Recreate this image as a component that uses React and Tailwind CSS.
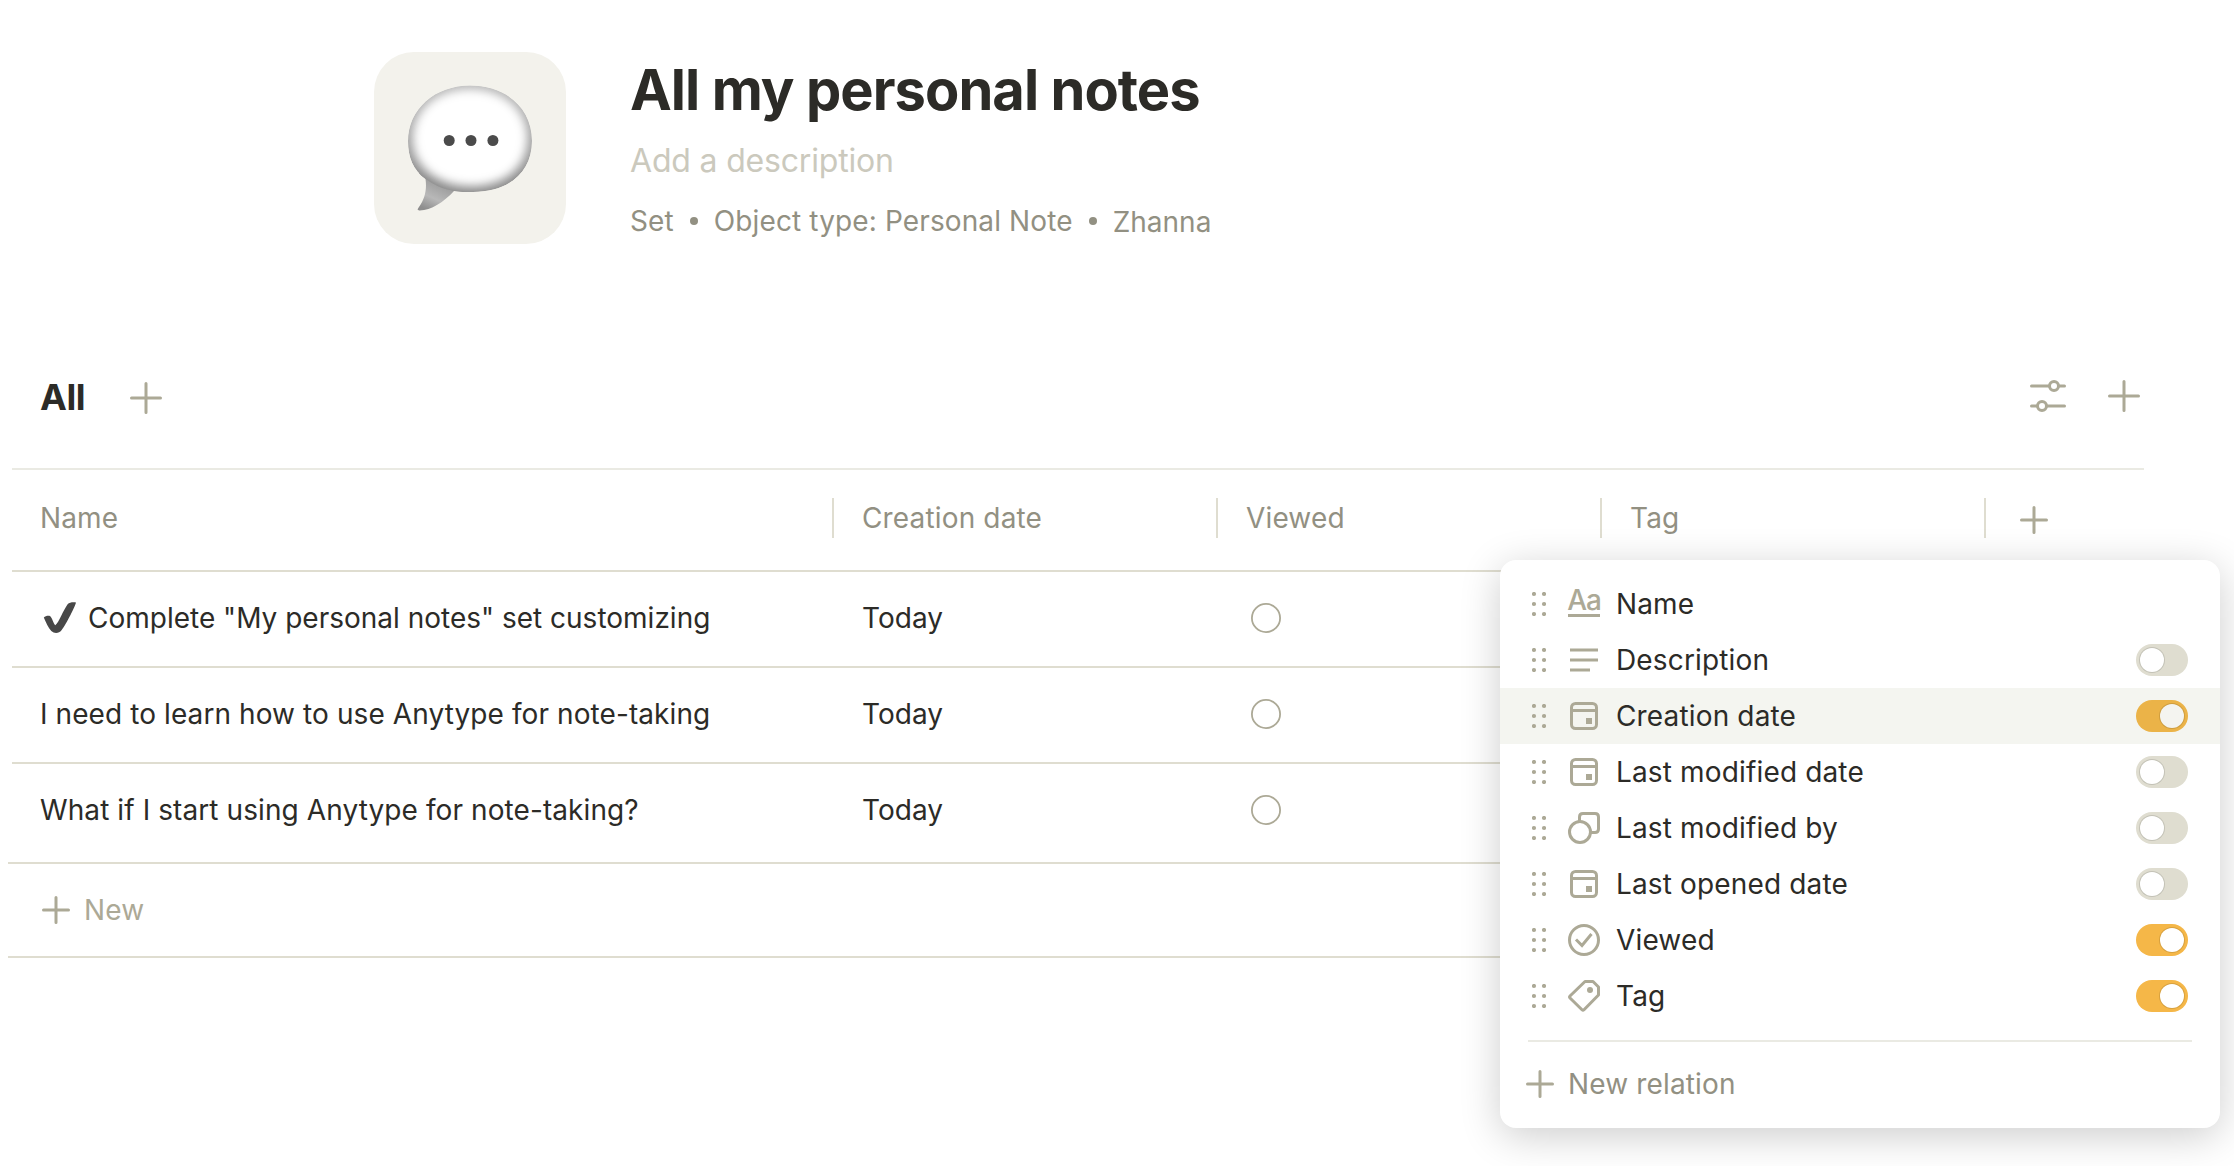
const Plus = ({ size, className = "" }) => (
  <svg width={size} height={size} viewBox={`0 0 ${size} ${size}`} className={`shrink-0 ${className}`} fill="none" stroke="#aca996" strokeWidth="3" strokeLinecap="round">
    <path d={`M${size / 2} 1.5V${size - 1.5}M1.5 ${size / 2}H${size - 1.5}`} />
  </svg>
);

const Bubble = () => (
  <svg width="130" height="130" viewBox="0 0 130 130">
    <defs>
      <linearGradient id="edge" x1="0" y1="0" x2="0" y2="1">
        <stop offset="0" stopColor="#b4b4b4" />
        <stop offset="0.45" stopColor="#a2a2a2" />
        <stop offset="0.85" stopColor="#868686" />
      </linearGradient>
      <linearGradient id="tail" x1="0.75" y1="0.1" x2="0.2" y2="0.9">
        <stop offset="0" stopColor="#858585" />
        <stop offset="0.7" stopColor="#b8b8b8" />
        <stop offset="1" stopColor="#8e8e8e" />
      </linearGradient>
      <filter id="soft" x="-20%" y="-20%" width="140%" height="140%">
        <feGaussianBlur stdDeviation="6" />
      </filter>
      <clipPath id="shape">
        <path d="M66 2.500C102 2.500 128 25 128 58C128 89 105 109 69 109C63 109 56 109 50 108C40 119 26 128 15 127.500C13 127.300 13.500 126 15 124C21 116 23 106 21.500 96C9 87 4 74 4 58C4 26 31 2.500 66 2.500Z" />
      </clipPath>
      <clipPath id="oval">
        <path d="M66 2.500C102 2.500 128 25 128 58C128 89 105 109 69 109C63 109 56 109 50 108C38 106 29 101 21.500 96C9 87 4 74 4 58C4 26 31 2.500 66 2.500Z" />
      </clipPath>
    </defs>
    <g clipPath="url(#shape)">
      <path d="M10 90H70V130H10Z" fill="url(#tail)" />
      <g clipPath="url(#oval)">
        <rect width="130" height="112" fill="url(#edge)" />
        <path d="M66 7C101 7 123 28 123 57C123 84 102 103 68 103C34 103 9 85 9 57C9 28 31 7 66 7Z" fill="#fff" filter="url(#soft)" />
        <ellipse cx="66" cy="54" rx="50" ry="42" fill="#fff" filter="url(#soft)" />
      </g>
    </g>
    <g fill="#4b4b4b">
      <circle cx="45.200" cy="57.500" r="5.500" />
      <circle cx="67" cy="57.500" r="5.500" />
      <circle cx="88.900" cy="57.500" r="5.500" />
    </g>
  </svg>
);

const Sliders = () => (
  <svg width="36" height="32" viewBox="0 0 36 32" fill="none" stroke="#aca996" strokeWidth="3" strokeLinecap="round">
    <path d="M1.500 6H19M29 6H34.500M1.500 26H7M17 26H34.500" />
    <circle cx="24" cy="6" r="4.500" />
    <circle cx="12" cy="26" r="4.500" />
  </svg>
);

const Handle = () => (
  <svg width="14" height="24" viewBox="0 0 14 24" fill="#aca996">
    {[2, 12, 22].map((y) => (
      <g key={y}>
        <circle cx="2" cy={y} r="2.100" />
        <circle cx="12" cy={y} r="2.100" />
      </g>
    ))}
  </svg>
);

const Icon = ({ kind }) => {
  if (kind === "text")
    return (
      <div className="flex h-8 w-8 flex-col items-center">
        <span className="h-[26px] text-[28px] leading-[24px] font-medium tracking-[-1px] text-[#aca996]">Aa</span>
        <div className="h-[3px] w-8 bg-[#aca996]" />
      </div>
    );
  return (
    <svg width="32" height="32" viewBox="0 0 32 32" fill="none" stroke="#aca996" strokeWidth="3">
      {kind === "lines" && <path d="M2 6H30M2 16H30M2 26H22" />}
      {kind === "date" && (
        <>
          <rect x="3.500" y="3.500" width="25" height="25" rx="4" />
          <path d="M3 10.500H29" />
          <rect x="18" y="18" width="6" height="6" fill="#aca996" stroke="none" />
        </>
      )}
      {kind === "relation" && (
        <>
          <circle cx="12" cy="20" r="10.500" />
          <path d="M11.500 9V5Q11.500 1.500 15 1.500H27Q30.500 1.500 30.500 5V17Q30.500 20.500 27 20.500H23" />
        </>
      )}
      {kind === "check" && (
        <>
          <circle cx="16" cy="16" r="14.500" />
          <path d="M8 15.500L14 21.500L23.500 10" />
        </>
      )}
      {kind === "tag" && (
        <>
          <path d="M17 1.500H25L30.500 7V15L16 29.700Q15 30.600 14 29.700L2 18Q1 17 2 16Z" strokeLinejoin="round" />
          <circle cx="22" cy="10" r="3" fill="#aca996" stroke="none" />
        </>
      )}
    </svg>
  );
};

const Toggle = ({ on, active }) => (
  <div className={`flex h-8 w-[52px] items-center rounded-full px-1 ${on ? (active ? "justify-end bg-[#ebb348]" : "justify-end bg-[#f5b748]") : "bg-[#dfddd0]"}`}>
    <div className={`h-6 w-6 rounded-full shadow-[0_0_0_1px_rgba(0,0,0,0.12)] ${active ? "bg-[#f4f4f0]" : "bg-white"}`} />
  </div>
);

const rows = [
  { name: 'Complete "My personal notes" set customizing', check: true },
  { name: "I need to learn how to use Anytype for note-taking" },
  { name: "What if I start using Anytype for note-taking?" },
];

const relations = [
  { label: "Name", kind: "text" },
  { label: "Description", kind: "lines", on: false },
  { label: "Creation date", kind: "date", on: true, active: true },
  { label: "Last modified date", kind: "date", on: false },
  { label: "Last modified by", kind: "relation", on: false },
  { label: "Last opened date", kind: "date", on: false },
  { label: "Viewed", kind: "check", on: true },
  { label: "Tag", kind: "tag", on: true },
];

const Head = ({ children, className }) => (
  <div className={`flex items-center justify-between ${className}`}>
    <span>{children}</span>
    <div className="h-10 w-[2px] bg-[#dfddd0]" />
  </div>
);

export default function App() {
  return (
    <div className="relative h-[1166px] w-[2234px] overflow-hidden bg-white font-['Inter',sans-serif] text-[28px] leading-[40px] tracking-[0.15px] text-[#2c2b27]">
      <header className="flex h-[244px] pt-[52px] pl-[374px]">
        <div className="flex h-48 w-48 items-start rounded-[40px] bg-[#f3f2ec] pt-[31px] pl-[30px]">
          <Bubble />
        </div>
        <div className="pl-16">
          <h1 className="mt-[6px] text-[56px] leading-[64px] font-bold tracking-[-0.94px]">All my personal notes</h1>
          <p className="mt-[19px] text-[32px] leading-[40px] tracking-[-0.18px] text-[#cbc9bd]">Add a description</p>
          <div className="mt-[19px] flex items-center tracking-[0.12px] text-[#929082]">
            <span>Set</span>
            <span className="mx-4 h-2 w-2 rounded-full bg-[#929082]" />
            <span>Object type: Personal Note</span>
            <span className="mx-4 h-2 w-2 rounded-full bg-[#929082]" />
            <span className="pt-[2px] tracking-[0px]">Zhanna</span>
          </div>
        </div>
      </header>

      <div className="mt-[126px] ml-3 flex h-[100px] w-[2132px] items-start border-b-2 border-[#eaeae3] pl-7">
        <span className="mt-[7px] text-[36px] leading-[40px] font-bold tracking-[-0.5px]">All</span>
        <Plus size={32} className="mt-3 ml-[45px]" />
        <div className="mt-[10px] mr-1 ml-auto flex gap-[42px]">
          <Sliders />
          <Plus size={32} />
        </div>
      </div>

      <div className="ml-3 flex h-[102px] w-[2132px] items-center border-b-2 border-[#dfddd0] pb-1 text-[#929082]">
        <Head className="w-[822px] pl-7">Name</Head>
        <Head className="w-[384px] pl-7">Creation date</Head>
        <Head className="w-[384px] pl-7">Viewed</Head>
        <Head className="w-[384px] pl-7">Tag</Head>
        <Plus size={28} className="mt-1 ml-[34px]" />
      </div>

      {rows.map((r, i) => (
        <div key={r.name} className={`ml-3 flex w-[2132px] items-center ${i === 2 ? "h-[98px] pb-1" : "h-24 border-b-2 border-[#dfddd0]"}`}>
          <div className="flex w-[822px] items-center pb-[2px] pl-7">
            {r.check && (
              <svg width="34" height="34" viewBox="0 0 34 34" className="mr-3 ml-[2px] shrink-0" fill="#484848">
                <path d="M1.800 16.500C3.500 15 6.500 14.300 8.300 15.300C10.300 17.500 11.500 22.500 13.300 24.300C17 21.500 21 9.500 25.800 3C27.500 1 32 0.800 34 1.500C33.500 4.500 24.500 23 19.500 29.300C17 32.500 12.300 32.800 9.300 30C6.300 27 4 21.500 1.800 16.500Z" />
              </svg>
            )}
            <span className={r.check ? "tracking-[0px]" : "tracking-[0.09px]"}>{r.name}</span>
          </div>
          <div className="w-[384px] pb-[2px] pl-7 tracking-[0.05px]">Today</div>
          <div className="w-[384px] pb-[2px] pl-[33px]">
            <svg width="30" height="30" viewBox="0 0 30 30" fill="none" stroke="#aca996" strokeWidth="1.800">
              <circle cx="15" cy="15" r="14.100" />
            </svg>
          </div>
        </div>
      ))}

      <div className="ml-2 flex h-24 w-[2136px] items-center border-y-2 border-[#dfddd0] pl-[34px] text-[#aca996]">
        <Plus size={28} />
        <span className="ml-[14px]">New</span>
      </div>

      <div className="absolute top-[560px] left-[1500px] h-[568px] w-[720px] rounded-2xl bg-white pt-4 shadow-[0_8px_40px_rgba(0,0,0,0.2)]">
        {relations.map((r) => (
          <div key={r.label} className={`flex h-14 items-center pr-8 pl-8 ${r.active ? "bg-[#f4f5f0]" : ""}`}>
            <Handle />
            <div className="ml-[22px]">
              <Icon kind={r.kind} />
            </div>
            <span className="ml-4 flex-1">{r.label}</span>
            {r.on !== undefined && <Toggle on={r.on} active={r.active} />}
          </div>
        ))}
        <div className="mx-7 mt-4 h-[2px] bg-[#eaeae3]" />
        <div className="mt-[22px] ml-[26px] flex items-center text-[#929082]">
          <Plus size={28} />
          <span className="ml-[14px]">New relation</span>
        </div>
      </div>
    </div>
  );
}
